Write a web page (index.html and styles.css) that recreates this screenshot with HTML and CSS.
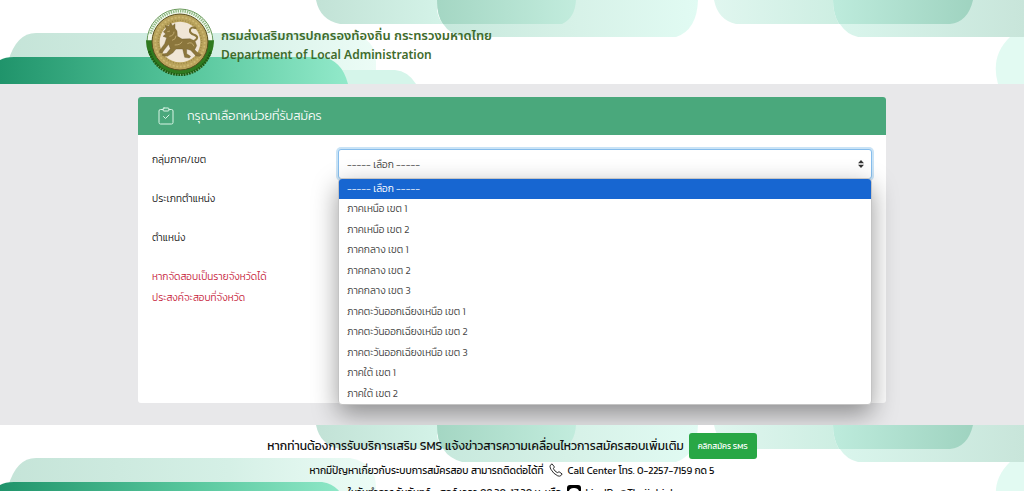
FILE: index.html
```html
<!DOCTYPE html>
<html lang="th">
<head>
    <meta charset="UTF-8">
    <meta name="viewport" content="width=device-width, initial-scale=1.0">
    <title>กรมส่งเสริมการปกครองท้องถิ่น</title>
    <link rel="stylesheet" href="styles.css">
</head>
<body>
    <!-- Shared wave pattern -->
    <svg class="defs" aria-hidden="true">
        <defs>
            <linearGradient id="dark"><stop offset="0" stop-color="#20946b"/><stop offset="0.55" stop-color="#58c79d"/><stop offset="1" stop-color="#92e9ca"/></linearGradient>
            <linearGradient id="pale"><stop offset="0" stop-color="#c5e4d8"/><stop offset="0.6" stop-color="#d5f0e6"/><stop offset="1" stop-color="#ecfcf6"/></linearGradient>
            <linearGradient id="topA"><stop offset="0" stop-color="#c2e2d6"/><stop offset="1" stop-color="#d4f3e8"/></linearGradient>
            <linearGradient id="topB"><stop offset="0" stop-color="#c6e8dc"/><stop offset="0.5" stop-color="#d6f1e7"/><stop offset="1" stop-color="#e1fbf3"/></linearGradient>
            <linearGradient id="mixAB"><stop offset="0" stop-color="#a4d6c3"/><stop offset="1" stop-color="#c2ecdd"/></linearGradient>
            <linearGradient id="topC"><stop offset="0" stop-color="#e0f6ef"/><stop offset="1" stop-color="#cdeee2"/></linearGradient>
            <linearGradient id="topD"><stop offset="0" stop-color="#daf6ed"/><stop offset="1" stop-color="#c8e5da"/></linearGradient>
            <linearGradient id="mixCD"><stop offset="0" stop-color="#bdebdc"/><stop offset="1" stop-color="#9fd3c0"/></linearGradient>
            <symbol id="pattern" viewBox="0 0 1024 84" preserveAspectRatio="none">
                <path fill="url(#pale)" d="M8 62 Q16 33 36 33 H350 Q376 38 376 62 V84 H8z"/>
                <path fill="#d5f5ea" d="M330 70 H395 Q408 71 416 84 H330z"/>
                <path fill="url(#dark)" d="M0 60 Q5 57 14 57 H322 Q342 60 348 84 H0z"/>
                <path fill="url(#topB)" d="M437 0 H698 Q697 30 676 37 H462 Q437 30 437 0z"/>
                <path fill="url(#topA)" d="M316 0 H437 V10 Q438 18 443 24 H340 Q320 20 316 0z"/>
                <path fill="url(#mixAB)" d="M437 0 H576 Q575 18 562 24 H443 Q437 16 437 0z"/>
                <path fill="url(#topD)" d="M833 0 H1024 V37 H858 Q836 32 833 0z"/>
                <path fill="url(#topC)" d="M714 0 H833 Q833 14 839 24 H736 Q718 20 714 0z"/>
                <path fill="url(#mixCD)" d="M833 0 H973 Q968 22 950 24 H839 Q833 14 833 0z"/>
                <path fill="#e2faf2" d="M1024 37 H1010 Q990 56 998 84 H1024z"/>
            </symbol>
        </defs>
    </svg>

    <header class="banner">
        <svg class="pattern" aria-hidden="true"><use href="#pattern"/></svg>
        <div class="container brand">
            <svg class="logo" viewBox="34 21 204 204" role="img" aria-label="ตรากรม">
                <circle cx="136" cy="123" r="99" fill="#f3faee" stroke="#6a9a5c" stroke-width="3"/>
                <path d="M48 98 A91 91 0 0 1 224 98" fill="none" stroke="#8fb985" stroke-width="8" stroke-dasharray="4 3"/>
                <path d="M34 118 H238 A102 102 0 0 1 34 118z" fill="#2f7a1f"/>
                <path d="M44 150 A95 95 0 0 0 228 150" fill="none" stroke="#1d5a14" stroke-width="8" stroke-dasharray="5 3"/>
                <circle cx="136" cy="123" r="84" fill="#b9a35c" stroke="#5a4f20" stroke-width="3"/>
                <circle cx="136" cy="123" r="74" fill="none" stroke="#cdb872" stroke-width="5" stroke-dasharray="6 5"/>
                <circle cx="136" cy="123" r="65" fill="none" stroke="#9d8846" stroke-width="4" stroke-dasharray="3 5"/>
                <circle cx="136" cy="123" r="61" fill="#f0e6d6"/>
                <g fill="#8b763c" stroke="#5d4e27" stroke-width="1" stroke-linejoin="round">
                    <path d="M86 92 L94 84 L92 74 L102 76 L108 66 L114 74 L121 68 L121 82 L127 90 L128 106 L142 114 L166 113 L181 120 L186 134 L180 146 L190 156 L200 161 L196 166 L184 165 L168 148 L156 144 L156 158 L168 166 L164 171 L150 169 L144 144 L124 144 L114 156 L98 166 L84 164 L84 159 L96 157 L107 143 L102 130 L90 145 L82 156 L74 154 L77 146 L90 128 L96 110 L85 106 L93 99z"/>
                    <path d="M178 120 Q196 110 180 102 Q164 98 166 86 Q170 76 182 81" fill="none" stroke="#8b763c" stroke-width="6" stroke-linecap="round"/>
                    <path d="M98 92 L106 90 M104 106 Q118 104 118 92 M112 118 Q124 116 124 104 M120 132 Q138 132 142 122 M158 128 Q172 120 178 136" fill="none" stroke="#d6bf87" stroke-width="2"/>
                </g>
            </svg>
            <div class="brand-text">
                <div>กรมส่งเสริมการปกครองท้องถิ่น กระทรวงมหาดไทย</div>
                <div class="brand-en">Department of Local Administration</div>
            </div>
        </div>
    </header>

    <main class="container">
        <form class="card">
            <h1 class="card-header">
                <svg class="clip-icon" viewBox="0 0 16 18" aria-hidden="true">
                    <path d="M5 2.500 H2.500 Q1 2.500 1 4 V15.500 Q1 17 2.500 17 H13.500 Q15 17 15 15.500 V4 Q15 2.500 13.500 2.500 H11"/>
                    <rect x="5" y="1" width="6" height="3" rx="1"/>
                    <path d="M5.500 9.500 L7.500 11.500 L11 8"/>
                </svg>
                กรุณาเลือกหน่วยที่รับสมัคร
            </h1>
            <div class="card-body">
                <div class="form-row">
                    <label for="region">กลุ่มภาค/เขต</label>
                    <div class="field">
                        <select class="select active" id="region">
                            <option>----- เลือก -----</option>
                        </select>
                        <ul class="menu" role="listbox" aria-label="กลุ่มภาค/เขต">
                            <li class="selected" role="option" aria-selected="true">----- เลือก -----</li>
                            <li role="option">ภาคเหนือ เขต 1</li>
                            <li role="option">ภาคเหนือ เขต 2</li>
                            <li role="option">ภาคกลาง เขต 1</li>
                            <li role="option">ภาคกลาง เขต 2</li>
                            <li role="option">ภาคกลาง เขต 3</li>
                            <li role="option">ภาคตะวันออกเฉียงเหนือ เขต 1</li>
                            <li role="option">ภาคตะวันออกเฉียงเหนือ เขต 2</li>
                            <li role="option">ภาคตะวันออกเฉียงเหนือ เขต 3</li>
                            <li role="option">ภาคใต้ เขต 1</li>
                            <li role="option">ภาคใต้ เขต 2</li>
                        </ul>
                    </div>
                </div>
                <div class="form-row">
                    <label for="type">ประเภทตำแหน่ง</label>
                    <select class="select" id="type"></select>
                </div>
                <div class="form-row">
                    <label for="position">ตำแหน่ง</label>
                    <select class="select" id="position"></select>
                </div>
                <div class="form-row">
                    <label class="warning" for="province">หากจัดสอบเป็นรายจังหวัดได้<br>ประสงค์จะสอบที่จังหวัด</label>
                    <select class="select" id="province"></select>
                </div>
            </div>
        </form>
    </main>

    <footer class="footer">
        <svg class="pattern" aria-hidden="true"><use href="#pattern"/></svg>
        <div class="sms">
            <span>หากท่านต้องการรับบริการเสริม SMS แจ้งข่าวสารความเคลื่อนไหวการสมัครสอบเพิ่มเติม</span>
            <button class="sms-button" type="button">คลิกสมัคร SMS</button>
        </div>
        <div class="contact">
            <span>หากมีปัญหาเกี่ยวกับระบบการสมัครสอบ สามารถติดต่อได้ที่</span>
            <svg class="phone" viewBox="0 0 16 16" aria-hidden="true"><path d="M3.500 1 L1.500 2.500 Q0.500 4 2 7 Q5 12.500 10 14.700 Q12 15.500 13.500 14.500 L15 12.500 L11.500 10 L9.500 11 Q6.500 9.500 5 6.500 L6.200 4.500z"/></svg>
            <span>Call Center โทร. 0-2257-7159 กด 5</span>
        </div>
        <div class="contact">
            <span>ในวันทำการ วันจันทร์ - ศุกร์ เวลา 08.30-17.30 น. หรือ</span>
            <svg class="line-icon" viewBox="0 0 14 14" aria-hidden="true"><rect width="14" height="14" rx="3"/><path d="M7 3 C0.500 3 0.500 9 6.500 9.500 L7 11.500 Q12 9 12 6 Q11 3 7 3z" fill="#fff"/><path d="M4 6.500 H10" stroke="#000"/></svg>
            <span>LineID : @Thaijobjob</span>
        </div>
    </footer>
</body>
</html>
```
FILE: styles.css
```css
* {
    box-sizing: border-box;
}

body {
    margin: 0;
    font-family: Kanit, Prompt, "Noto Sans", sans-serif;
    font-size: 10px;
    font-weight: 300;
    color: #222;
    background-color: #e8e8ea;
}

.defs {
    position: absolute;
    width: 0;
    height: 0;
}

.container {
    width: 100%;
    max-width: 748px;
    margin: 0 auto;
}

/* Banner */
.banner,
.footer {
    position: relative;
    overflow: hidden;
    background-color: #fff;
}

.pattern {
    position: absolute;
    top: 0;
    left: 0;
    width: 100%;
    height: 84px;
}

.brand {
    position: relative;
    display: flex;
    align-items: center;
    gap: 7px;
    height: 84px;
    padding-left: 8px;
}

.logo {
    width: 68px;
    height: 68px;
}

.brand-text {
    font-family: "Noto Sans", "Noto Sans Thai", Prompt, sans-serif;
    font-size: 13px;
    font-weight: 600;
    line-height: 19px;
    color: #3f6b2c;
    padding-top: 5px;
}

.brand-en {
    font-size: 12px;
}

/* Card */
.card {
    margin: 13px 0 22px;
    background-color: #fff;
    border-radius: 3px;
}

.card-header {
    display: flex;
    align-items: center;
    gap: 13px;
    height: 38px;
    margin: 0;
    padding: 0 20px;
    font-family: Prompt, Kanit, "Noto Sans", sans-serif;
    font-size: 12px;
    font-weight: 300;
    color: #fff;
    background-color: #4aa87c;
    border-radius: 3px 3px 0 0;
}

.clip-icon {
    width: 16px;
    height: 18px;
    fill: none;
    stroke: #d9f5e6;
    stroke-linecap: round;
    stroke-linejoin: round;
}

.card-body {
    display: flex;
    flex-direction: column;
    gap: 9px;
    min-height: 268px;
    padding: 14px;
}

.form-row {
    display: grid;
    grid-template-columns: 186px 1fr;
    align-items: start;
    line-height: 21px;
}

.warning {
    color: #c8293f;
}

.field {
    position: relative;
}

.select {
    appearance: none;
    width: 100%;
    height: 30px;
    padding: 0 8px;
    font: inherit;
    color: #444;
    background-color: #fff;
    border: 1px solid #ced4da;
    border-radius: 3px;
}

.select.active {
    border-color: #86bdec;
    box-shadow: 0 0 0 2px #c9e3f6;
}

.field::after {
    content: "";
    position: absolute;
    top: 11px;
    right: 8px;
    width: 6px;
    height: 8px;
    background-color: #333;
    clip-path: polygon(50% 0, 100% 40%, 0 40%, 0 60%, 100% 60%, 50% 100%, 0 60%, 0 40%);
}

/* Open list */
.menu {
    position: absolute;
    z-index: 1;
    top: 29px;
    left: 0;
    display: grid;
    grid-auto-rows: 1fr;
    width: 100%;
    height: 227px;
    margin: 0;
    padding: 0;
    overflow: hidden;
    list-style: none;
    line-height: 20px;
    color: #444;
    background-color: #fff;
    border: 1px solid #c4c4c4;
    border-radius: 4px;
    box-shadow: 0 9px 26px rgba(0, 0, 0, 0.4);
}

.menu li {
    padding: 0 8px;
}

.menu .selected {
    color: #fff;
    background-color: #1766d1;
}

/* Footer */
.footer {
    z-index: 2;
    height: 90px;
    padding-top: 8px;
    color: #111;
    font-weight: 400;
}

.sms,
.contact {
    position: relative;
    display: flex;
    align-items: center;
    justify-content: center;
    gap: 5px;
    white-space: nowrap;
}

.sms {
    font-size: 12px;
}

.contact {
    height: 22px;
}

.sms-button {
    height: 26px;
    padding: 0 9px;
    font: inherit;
    font-size: 8px;
    color: #fff;
    background-color: #28a745;
    border: 0;
    border-radius: 3px;
}

.phone {
    width: 14px;
    height: 14px;
    fill: #fff;
    stroke: #111;
}

.line-icon {
    width: 14px;
    height: 14px;
}
```
